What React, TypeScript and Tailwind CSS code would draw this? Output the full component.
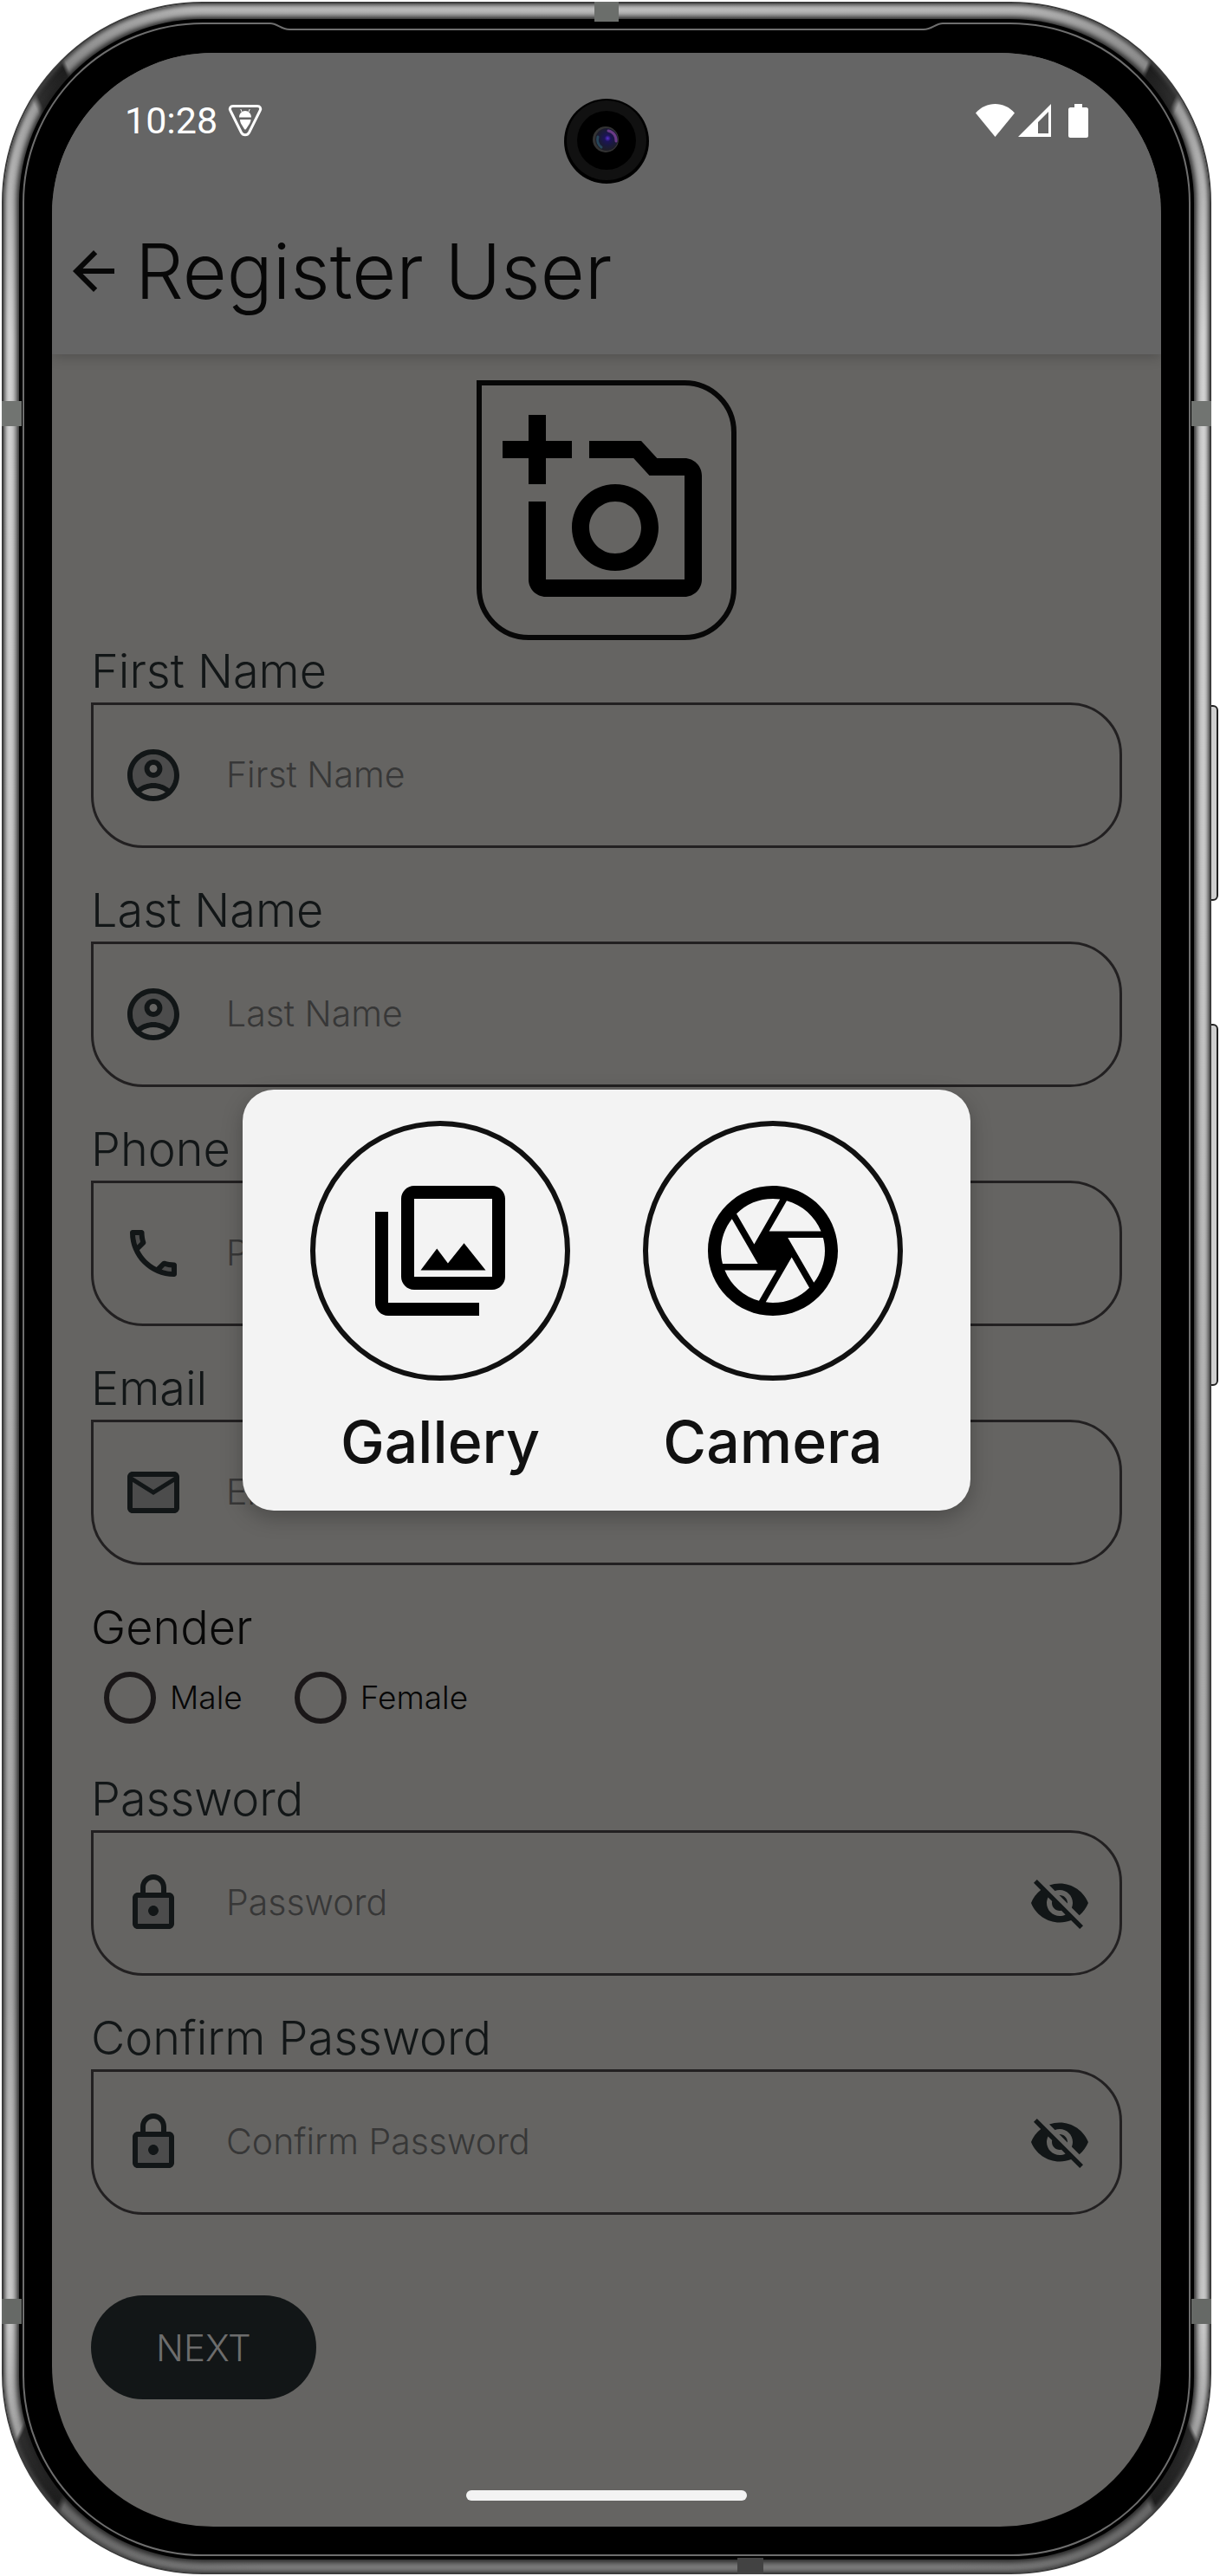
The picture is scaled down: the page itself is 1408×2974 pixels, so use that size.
import type { ReactNode } from "react";
import {
  MdArrowBack,
  MdOutlineAddAPhoto,
  MdOutlineCamera,
  MdOutlinePhotoLibrary,
  MdVisibilityOff,
} from "react-icons/md";

type TwoToneProps = { tone: string; line: string };

function TwoToneIcon({ tone, line }: TwoToneProps) {
  return (
    <svg viewBox="0 0 24 24" className="size-[72px] shrink-0" fill="#121617" aria-hidden="true">
      <path d={tone} fill="#4c4c4c" />
      <path d={line} />
    </svg>
  );
}

const account: TwoToneProps = {
  tone: "M12 4c-4.42 0-8 3.58-8 8 0 1.95.7 3.73 1.86 5.12C7.55 15.8 9.68 15 12 15s4.45.8 6.14 2.12C19.3 15.73 20 13.95 20 12c0-4.42-3.58-8-8-8zm0 9c-1.93 0-3.5-1.57-3.5-3.5S10.07 6 12 6s3.5 1.57 3.5 3.5S13.93 13 12 13z",
  line: "M12 2C6.48 2 2 6.48 2 12s4.48 10 10 10 10-4.48 10-10S17.52 2 12 2zM7.35 18.5C8.66 17.56 10.26 17 12 17s3.34.56 4.65 1.5c-1.31.94-2.91 1.5-4.65 1.5s-3.34-.56-4.65-1.5zm10.79-1.38C16.45 15.8 14.32 15 12 15s-4.45.8-6.14 2.12C4.7 15.73 4 13.95 4 12c0-4.42 3.58-8 8-8s8 3.58 8 8c0 1.95-.7 3.73-1.86 5.12zM12 6c-1.93 0-3.5 1.57-3.5 3.5S10.07 13 12 13s3.5-1.57 3.5-3.5S13.93 6 12 6zm0 5c-.83 0-1.5-.67-1.5-1.5S11.17 8 12 8s1.5.67 1.5 1.5S12.83 11 12 11z",
};

const phone: TwoToneProps = {
  tone: "M6.54 5h-1.5c.09 1.32.35 2.59.75 3.79l1.2-1.21c-.24-.83-.39-1.7-.45-2.58zm8.66 13.21c1.21.41 2.48.67 3.8.76v-1.5c-.88-.07-1.75-.22-2.6-.45l-1.2 1.19z",
  line: "M20 15.5c-1.25 0-2.45-.2-3.57-.57-.1-.03-.21-.05-.31-.05-.26 0-.51.1-.71.29l-2.2 2.2c-2.83-1.44-5.15-3.75-6.59-6.59l2.2-2.21c.28-.26.36-.65.25-1C8.7 6.45 8.5 5.25 8.5 4c0-.55-.45-1-1-1H4c-.55 0-1 .45-1 1 0 9.39 7.61 17 17 17 .55 0 1-.45 1-1v-3.5c0-.55-.45-1-1-1zM5.03 5h1.5c.07.88.22 1.75.46 2.59L5.79 8.8c-.41-1.21-.67-2.48-.76-3.8zM19 18.97c-1.32-.09-2.59-.35-3.8-.75l1.2-1.2c.85.24 1.71.39 2.59.45v1.5z",
};

const mail: TwoToneProps = {
  tone: "M20 8l-8 5-8-5v10h16zm0-2H4l8 4.99z",
  line: "M4 20h16c1.1 0 2-.9 2-2V6c0-1.1-.9-2-2-2H4c-1.1 0-2 .9-2 2v12c0 1.1.9 2 2 2zM20 6l-8 4.99L4 6h16zM4 8l8 5 8-5v10H4V8z",
};

const lock: TwoToneProps = {
  tone: "M6 20h12V10H6v10zm6-7c1.1 0 2 .9 2 2s-.9 2-2 2-2-.9-2-2 .9-2 2-2z",
  line: "M18 8h-1V6c0-2.76-2.24-5-5-5S7 3.24 7 6v2H6c-1.1 0-2 .9-2 2v10c0 1.1.9 2 2 2h12c1.1 0 2-.9 2-2V10c0-1.1-.9-2-2-2zM9 6c0-1.66 1.34-3 3-3s3 1.34 3 3v2H9V6zm9 14H6V10h12v10zm-6-3c1.1 0 2-.9 2-2s-.9-2-2-2-2 .9-2 2 .9 2 2 2z",
};

type FieldProps = { id: string; label: string; icon: TwoToneProps; type?: string; secret?: boolean };

function Field({ id, label, icon, type = "text", secret }: FieldProps) {
  return (
    <div>
      <label htmlFor={id} className="block text-[54px] leading-[72px] font-light text-[#121617]">
        {label}
      </label>
      <div className="flex h-[168px] items-center gap-12 rounded-[60px] rounded-tl-none border-3 border-[#222021] px-[33px]">
        <TwoToneIcon tone={icon.tone} line={icon.line} />
        <input
          id={id}
          type={secret ? "password" : type}
          placeholder={label}
          className="min-w-0 flex-1 bg-transparent text-[41px] font-light text-[#121617] outline-none placeholder:text-[#373737]"
        />
        {secret && (
          <button type="button" aria-label={`Show ${label}`} className="shrink-0">
            <MdVisibilityOff className="size-[72px] text-[#121617]" />
          </button>
        )}
      </div>
    </div>
  );
}

function GenderOption({ label }: { label: string }) {
  return (
    <label className="flex items-center gap-4 text-[37px] font-light text-[#070707]">
      <input
        type="radio"
        name="gender"
        value={label}
        className="size-[60px] appearance-none rounded-full border-6 border-[#1a1718]"
      />
      {label}
    </label>
  );
}

function SourceOption({ label, children }: { label: string; children: ReactNode }) {
  return (
    <button type="button" className="flex w-[300px] flex-col items-center gap-[22px]">
      <span className="flex size-[300px] items-center justify-center rounded-full border-6 border-[#111] text-black">
        {children}
      </span>
      <span className="text-[68px] leading-[96px] font-medium text-[#111]">{label}</span>
    </button>
  );
}

function StatusBar() {
  return (
    <div className="flex h-[156px] items-center justify-between px-[84px] text-white">
      <div className="flex items-center gap-3">
        <span className="font-[Roboto,sans-serif] text-[43px]">10:28</span>
        <svg viewBox="0 0 40 38" className="h-[38px] w-10" aria-hidden="true">
          <path
            d="M6 2.5h28c3 0 4.500 2.500 3.200 5L24.500 33c-2 3.700-7 3.700-9 0L2.800 7.500C1.500 5 3 2.500 6 2.500z"
            fill="none"
            stroke="currentColor"
            strokeWidth="3"
          />
          <path d="M16 9l-1.200-3M24 9l1.200-3" fill="none" stroke="currentColor" strokeWidth="1" />
          <path
            d="M13 15.500c0-4.500 3.200-7.500 7-7.500s7 3 7 7.500zM14 18h12.500c0 1.500-.5 3-1.300 4.500L21 29c-.6.800-1.400.8-2 0l-4-6.500c-.7-1.500-1-3-1-4.500z"
            fill="currentColor"
          />
        </svg>
      </div>
      <div className="flex items-center gap-1">
        <svg viewBox="0 0 45 38" className="h-[38px] w-[45px]" fill="currentColor" aria-hidden="true">
          <path d="M0 10.500C6 3.500 14 0 22.500 0S39 3.500 45 10.500L22.500 38z" />
        </svg>
        <svg viewBox="0 0 38 38" className="h-[38px] w-[38px]" fill="currentColor" fillRule="evenodd" aria-hidden="true">
          <path d="M38 0v38H0zM35 9L23 21v13h12z" />
        </svg>
        <svg viewBox="0 0 23 39" className="ml-4 h-[39px] w-[23px]" fill="currentColor" aria-hidden="true">
          <path d="M7 0h9v4h4.500A2.500 2.500 0 0 1 23 6.500v30a2.500 2.500 0 0 1-2.500 2.500h-18A2.500 2.500 0 0 1 0 36.500v-30A2.500 2.500 0 0 1 2.500 4H7z" />
        </svg>
      </div>
    </div>
  );
}

function CameraHole() {
  return (
    <svg viewBox="0 0 98 98" className="absolute top-[53px] left-1/2 size-[98px] -translate-x-1/2" aria-hidden="true">
      <defs>
        <radialGradient id="lens" cx="0.55" cy="0.45" r="0.55">
          <stop offset="0" stopColor="#5a2fd0" />
          <stop offset="0.25" stopColor="#1c1458" />
          <stop offset="0.6" stopColor="#1a1a3c" />
          <stop offset="1" stopColor="#1d1d24" />
        </radialGradient>
      </defs>
      <circle cx="49" cy="49" r="49" fill="#000" />
      <circle cx="49" cy="48" r="46" fill="#111" />
      <circle cx="49" cy="48" r="34" fill="#000" />
      <circle cx="48" cy="47" r="15" fill="#333" />
      <circle cx="49" cy="47" r="13" fill="url(#lens)" />
      <path d="M51 37a11 11 0 0 1 9 12" fill="none" stroke="#6a3a86" strokeWidth="3" strokeLinecap="round" />
      <path d="M39 44a11 11 0 0 0 4 12" fill="none" stroke="#27465a" strokeWidth="3" strokeLinecap="round" />
    </svg>
  );
}

function RegisterScreen() {
  return (
    <div className="relative overflow-hidden rounded-[186px] bg-[#656462]">
      <header className="relative bg-[#656565] shadow-[0_3px_14px_rgba(0,0,0,0.2)]">
        <StatusBar />
        <div className="flex h-48 items-center gap-3 pl-3">
          <button type="button" aria-label="Back">
            <MdArrowBack className="size-[72px] text-[#070707]" />
          </button>
          <h1 className="text-[88px] leading-none font-light text-[#070707]">Register User</h1>
        </div>
      </header>

      <form className="flex flex-col px-[45px] pt-[30px]">
        <button
          type="button"
          aria-label="Add photo"
          className="flex size-[300px] items-center justify-center self-center rounded-[60px] rounded-tl-none border-6 border-[#070707]"
        >
          <MdOutlineAddAPhoto className="size-60 text-black" />
        </button>
        <div className="flex flex-col gap-9">
          <Field id="first-name" label="First Name" icon={account} />
          <Field id="last-name" label="Last Name" icon={account} />
          <Field id="phone" label="Phone" icon={phone} type="tel" />
          <Field id="email" label="Email" icon={mail} type="email" />
          <fieldset>
            <legend className="text-[54px] leading-[72px] font-light text-[#070707]">Gender</legend>
            <div className="flex h-[90px] items-center gap-[60px] pl-[15px]">
              <GenderOption label="Male" />
              <GenderOption label="Female" />
            </div>
          </fieldset>
          <Field id="password" label="Password" icon={lock} secret />
          <Field id="confirm-password" label="Confirm Password" icon={lock} secret />
        </div>
        <button
          type="button"
          className="mt-[93px] h-[120px] self-start rounded-[60px] bg-[#121617] px-[75px] text-[42px] font-light text-[#6d6d6d]"
        >
          NEXT
        </button>
      </form>
      <div className="mx-auto mt-[105px] mb-[30px] h-3 w-[324px] rounded-full bg-[#f3f3f3]" />

      <div className="absolute inset-0 flex items-center justify-center pt-6">
        <div
          role="dialog"
          aria-label="Choose photo source"
          className="flex h-[486px] w-[840px] justify-center gap-[84px] rounded-[36px] bg-[#f3f3f3] pt-9 shadow-[0_8px_24px_rgba(0,0,0,0.25)]"
        >
          <SourceOption label="Gallery">
            <MdOutlinePhotoLibrary className="size-[180px]" />
          </SourceOption>
          <SourceOption label="Camera">
            <MdOutlineCamera className="size-[180px]" />
          </SourceOption>
        </div>
      </div>
      <CameraHole />
    </div>
  );
}

export default function App() {
  return (
    <main className="w-full bg-white pt-[2px] pr-[10px] pb-[2px] pl-[2px] font-[Inter,sans-serif]">
      <div className="relative">
        <div className="absolute top-[812px] -right-2 h-[226px] w-3 rounded-r-[6px] border-2 border-[#222] bg-[#cfcfcf]" />
        <div className="absolute top-[1180px] -right-2 h-[418px] w-3 rounded-r-[6px] border-2 border-[#222] bg-[#cfcfcf]" />
        <div className="relative rounded-[232px] border-2 border-[#3c3c3c] bg-[conic-gradient(#bcbcbc_0deg,#b4b4b4_18deg,#8c8c8c_23.8deg,#1e1e1e_24deg,#2e2e2e_25.5deg,#a0a0a0_25.8deg,#d2d2d2_32deg,#c6c6c6_60deg,#adadad_110deg,#a8a8a8_140deg,#cacaca_150deg,#a0a0a0_152.8deg,#2e2e2e_153deg,#1e1e1e_155.7deg,#6a6a6a_156deg,#7c7c7c_165deg,#7c7c7c_195deg,#6a6a6a_204deg,#1e1e1e_204.300deg,#2e2e2e_207deg,#a0a0a0_207.200deg,#cacaca_210deg,#a8a8a8_220deg,#adadad_250deg,#c6c6c6_300deg,#d2d2d2_328deg,#a0a0a0_334.200deg,#2e2e2e_334.500deg,#1e1e1e_336deg,#8c8c8c_336.200deg,#b4b4b4_342deg,#bcbcbc_360deg)] px-[18px] pt-[18px] pb-[15px] shadow-[inset_0_0_4px_2px_#444]">
          <div className="rounded-[212px] bg-black p-1 shadow-[0_0_6px_3px_#222]">
            <div className="rounded-[208px] border-2 border-[#6e6e6e] px-8 pt-[33px] pb-8">
              <RegisterScreen />
            </div>
          </div>
        </div>
        <svg viewBox="0 0 784 16" className="absolute top-[20px] left-1/2 h-4 w-[784px] -translate-x-1/2" fill="none" aria-hidden="true">
          <path d="M4 4h776v5H4z" fill="#000" />
          <path d="M0 5h4c8 0 12 7 22 7h732c10 0 14-7 22-7h4" stroke="#6e6e6e" strokeWidth="2" />
        </svg>
        <div className="absolute top-0 left-1/2 h-[23px] w-[28px] -translate-x-1/2 bg-[#6b6e6b]" />
        <div className="absolute top-[461px] left-0 h-[29px] w-[23px] bg-[#717471]" />
        <div className="absolute top-[461px] right-0 h-[29px] w-[23px] bg-[#717471]" />
        <div className="absolute top-[2652px] left-0 h-[29px] w-[23px] bg-[#666966]" />
        <div className="absolute top-[2652px] right-0 h-[29px] w-[23px] bg-[#666966]" />
        <div className="absolute right-[517px] bottom-0 h-[19px] w-[30px] bg-[#424242]" />
      </div>
    </main>
  );
}
